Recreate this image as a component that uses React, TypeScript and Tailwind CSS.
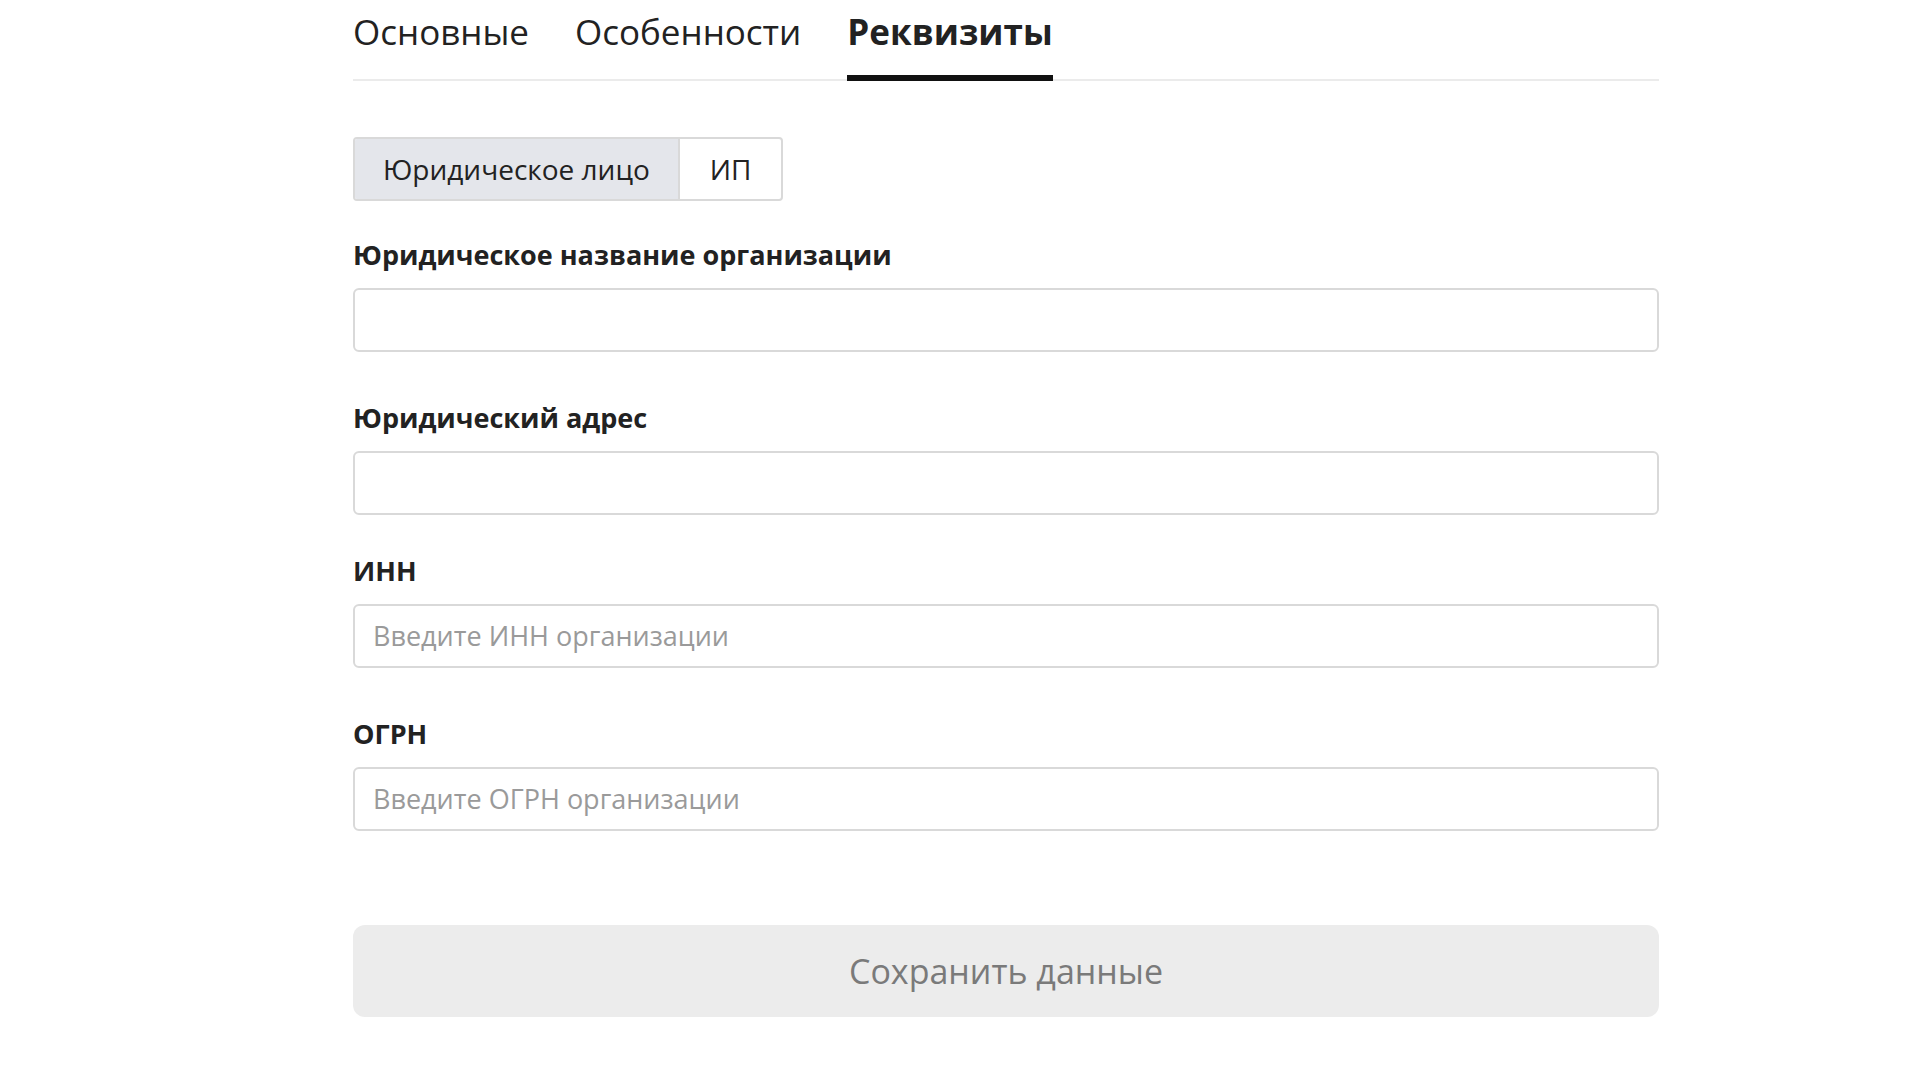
export default function App() {
  const font = { fontFamily: '"Open Sans", "Noto Sans", sans-serif' };
  const Input = ({ ph }: { ph?: string }) => (
    <div className="h-[64px] rounded-[6px] border-2 border-[#d9d9d9] flex items-center px-[18px] text-[27px] text-[#9a9a9a]">{ph}</div>
  );
  const Label = ({ t }: { t: string }) => <div className="text-[27px] font-bold text-[#222] leading-none">{t}</div>;
  return (
    <div className="w-[1920px] h-[1080px] bg-white" style={font}>
      <div className="ml-[353px] w-[1306px] pt-[14px]">
        <div className="flex gap-[46px] border-b-2 border-[#ebebeb] text-[35px] text-[#222] leading-none">
          <div className="pb-[28px]">Основные</div>
          <div className="pb-[28px]">Особенности</div>
          <div className="pb-[26px] font-bold border-b-[6px] border-[#111] -mb-[2px]">Реквизиты</div>
        </div>
        <div className="mt-[56px] inline-flex h-[64px] border-2 border-[#d9d9d9] rounded-[4px] overflow-hidden text-[28px] text-[#222]">
          <div className="bg-[#e4e6eb] px-[28px] flex items-center border-r-2 border-[#d9d9d9]">Юридическое лицо</div>
          <div className="px-[30px] flex items-center">ИП</div>
        </div>
        <div className="mt-[40px]"><Label t="Юридическое название организации" /></div>
        <div className="mt-[20px]"><Input /></div>
        <div className="mt-[52px]"><Label t="Юридический адрес" /></div>
        <div className="mt-[20px]"><Input /></div>
        <div className="mt-[42px]"><Label t="ИНН" /></div>
        <div className="mt-[20px]"><Input ph="Введите ИНН организации" /></div>
        <div className="mt-[52px]"><Label t="ОГРН" /></div>
        <div className="mt-[20px]"><Input ph="Введите ОГРН организации" /></div>
        <div className="mt-[94px] h-[92px] rounded-[12px] bg-[#ececec] flex items-center justify-center text-[34px] text-[#7a7a7a]">Сохранить данные</div>
      </div>
    </div>
  );
}
